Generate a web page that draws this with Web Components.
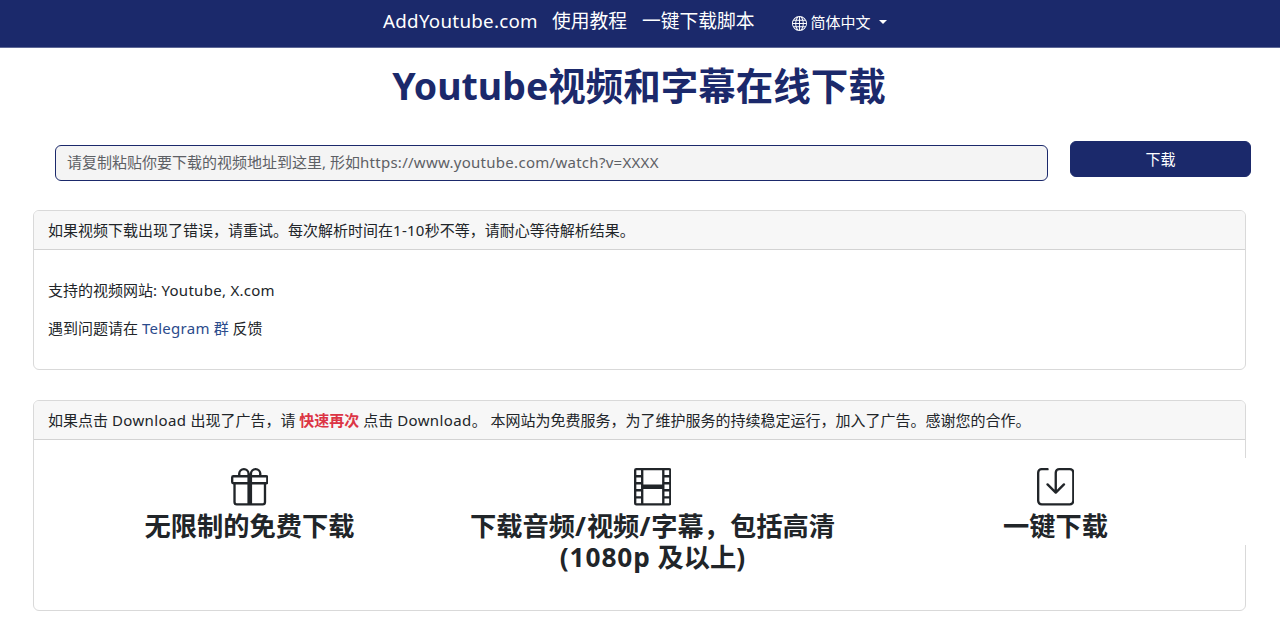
<!DOCTYPE html>
<html lang="zh-CN">
<head>
<meta charset="utf-8">
<title>AddYoutube.com</title>
<style>
  body{
    margin:0;
    height:623px;
    overflow:hidden;
    background:#fff;
    color:#212529;
    font:15px/22.5px "Noto Sans","Noto Sans CJK SC",sans-serif;
  }
  main{
    display:flex;
    flex-direction:column;
  }
  info-card{
    margin:0 34px 30px 33px;
  }
  p{
    margin:0 0 15px;
  }
  a{
    color:#2b4b8c;
    text-decoration:none;
  }
  b{
    color:#dc3545;
  }
  page-title{
    --latin-spacing:0;
  }
  .ad{
    --latin-spacing:.4px;
  }
  feature-item{
    --latin-spacing:.9px;
  }
</style>
</head>
<body>
<site-nav></site-nav>
<main>
  <page-title><latin-text>Youtube</latin-text>视频和字幕在线下载</page-title>
  <download-form>请复制粘贴你要下载的视频地址到这里, 形如<latin-text>https://www.youtube.com/watch?v=XXXX</latin-text></download-form>
  <info-card style="height:160px">
    <span slot="header">如果视频下载出现了错误，请重试。每次解析时间在<latin-text>1-10</latin-text>秒不等，请耐心等待解析结果。</span>
    <p>支持的视频网站<latin-text>: Youtube, X.com</latin-text></p>
    <p>遇到问题请在 <a href="#"><latin-text>Telegram</latin-text> 群</a> 反馈</p>
  </info-card>
  <info-card style="height:211px">
    <span slot="header" class="ad">如果点击 <latin-text>Download</latin-text> 出现了广告，请 <b>快速再次</b> 点击 <latin-text>Download</latin-text>。 本网站为免费服务，为了维护服务的持续稳定运行，加入了广告。感谢您的合作。</span>
    <feature-list>
      <feature-item icon="gift">无限制的免费下载</feature-item>
      <feature-item icon="film">下载音频<latin-text>/</latin-text>视频<latin-text>/</latin-text>字幕，包括高清<br><latin-text>(1080p</latin-text> 及以上)</feature-item>
      <feature-item icon="save">一键下载</feature-item>
    </feature-list>
  </info-card>
</main>
<script>
const ICONS={
  globe:'<path d="M0 8a8 8 0 1 1 16 0A8 8 0 0 1 0 8m7.5-6.923c-.67.204-1.335.82-1.887 1.855A8 8 0 0 0 5.145 4H7.5zM4.09 4a9.3 9.3 0 0 1 .64-1.539 7 7 0 0 1 .597-.933A7.03 7.03 0 0 0 2.255 4zm-.582 3.5c.03-.877.138-1.718.312-2.5H1.674a7 7 0 0 0-.656 2.5zM4.847 5a12.5 12.5 0 0 0-.338 2.5H7.5V5zM8.5 5v2.5h2.99a12.5 12.5 0 0 0-.337-2.5zM4.51 8.5a12.5 12.5 0 0 0 .337 2.5H7.5V8.5zm3.99 0V11h2.653c.187-.765.306-1.608.338-2.5zM5.145 12q.208.58.468 1.068c.552 1.035 1.218 1.65 1.887 1.855V12zm.182 2.472a7 7 0 0 1-.597-.933A9.3 9.3 0 0 1 4.09 12H2.255a7 7 0 0 0 3.072 2.472M3.82 11a13.7 13.7 0 0 1-.312-2.5h-2.49c.062.89.291 1.733.656 2.5zm6.853 3.472A7 7 0 0 0 13.745 12H11.91a9.3 9.3 0 0 1-.64 1.539 7 7 0 0 1-.597.933M8.5 12v2.923c.67-.204 1.335-.82 1.887-1.855q.26-.487.468-1.068zm3.68-1h2.146c.365-.767.594-1.61.656-2.5h-2.49a13.7 13.7 0 0 1-.312 2.5m2.802-3.5a7 7 0 0 0-.656-2.5H12.18c.174.782.282 1.623.312 2.5zM11.27 2.461c.247.464.462.98.64 1.539h1.835a7 7 0 0 0-3.072-2.472c.218.284.418.598.597.933M10.855 4a8 8 0 0 0-.468-1.068C9.835 1.897 9.17 1.282 8.5 1.077V4z"/>',
  gift:'<path d="M3 2.5a2.5 2.5 0 0 1 5 0 2.5 2.5 0 0 1 5 0v.006c0 .07 0 .27-.038.494H15a1 1 0 0 1 1 1v2a1 1 0 0 1-1 1v7.5a1.5 1.5 0 0 1-1.5 1.5h-11A1.5 1.5 0 0 1 1 14.500V7a1 1 0 0 1-1-1V4a1 1 0 0 1 1-1h2.038A3 3 0 0 1 3 2.506zm1.068.5H7v-.5a1.500 1.500 0 1 0-3 0c0 .085.002.274.045.43zM9 3h2.932l.023-.07c.043-.156.045-.345.045-.43a1.500 1.500 0 0 0-3 0zM1 4v2h6V4zm8 0v2h6V4zm5 3H9v8h4.500a.5.5 0 0 0 .5-.5zm-7 8V7H2v7.500a.5.5 0 0 0 .5.5z"/>',
  film:'<path d="M0 1a1 1 0 0 1 1-1h14a1 1 0 0 1 1 1v14a1 1 0 0 1-1 1H1a1 1 0 0 1-1-1zm4 0v6h8V1zm8 8H4v6h8zM1 1v2h2V1zm2 3H1v2h2zM1 7v2h2V7zm2 3H1v2h2zm-2 3v2h2v-2zM15 1h-2v2h2zm-2 3v2h2V4zm2 3h-2v2h2zm-2 3v2h2v-2zm2 3h-2v2h2z"/>',
  save:'<path d="M2 1a1 1 0 0 0-1 1v12a1 1 0 0 0 1 1h12a1 1 0 0 0 1-1V2a1 1 0 0 0-1-1H9.500a1 1 0 0 0-1 1v7.293l2.646-2.647a.5.5 0 0 1 .708.708l-3.500 3.500a.5.5 0 0 1-.708 0l-3.500-3.500a.5.5 0 1 1 .708-.708L7.500 9.293V2a2 2 0 0 1 2-2H14a2 2 0 0 1 2 2v12a2 2 0 0 1-2 2H2a2 2 0 0 1-2-2V2a2 2 0 0 1 2-2h2.500a.5.5 0 0 1 0 1z"/>'
};
const svg=name=>`<svg viewBox="0 0 16 16" fill="currentColor">${ICONS[name]}</svg>`;

// 중국어 문장 속 라틴 문자
class LatinText extends HTMLElement{
  constructor(){
    super();
    this.attachShadow({mode:'open'});
    this.shadowRoot.innerHTML=`
      <style>
        :host{
          display:inline;
          letter-spacing:var(--latin-spacing,.28px);
        }
      </style>
      <slot></slot>
    `.trim().replace(/>\s+</g,'><');
  }
}
customElements.define("latin-text",LatinText);

class SiteNav extends HTMLElement{
  constructor(){
    super();
    this.attachShadow({mode:'open'});
    this.shadowRoot.innerHTML=`
      <style>
        :host{
          display:block;
          background:#1b296b;
          color:#fff;
          border-bottom:1px solid #5e6896;
        }
        nav{
          display:flex;
          align-items:center;
          height:47px;
          padding:0 0 4px 383px;
          box-sizing:border-box;
          font-size:18.75px;
          white-space:nowrap;
        }
        a{
          color:inherit;
          text-decoration:none;
          margin-right:15px;
        }
        .brand{
          width:154px;
        }
        .lang{
          display:flex;
          align-items:center;
          margin:1px 0 0 22px;
          font-size:15px;
        }
        svg{
          width:15px;
          height:15px;
          margin:2px 4px 0 0;
        }
        .lang::after{
          content:'';
          margin:-1px 0 0 8px;
          border:4px solid transparent;
          border-top-color:#fff;
          border-bottom:0;
        }
      </style>
      <nav>
        <a class="brand"><latin-text>AddYoutube.com</latin-text></a>
        <a>使用教程</a>
        <a>一键下载脚本</a>
        <span class="lang">${svg('globe')}简体中文</span>
      </nav>
    `;
  }
}
customElements.define("site-nav",SiteNav);

class PageTitle extends HTMLElement{
  constructor(){
    super();
    this.attachShadow({mode:'open'});
    this.shadowRoot.innerHTML=`
      <style>
        :host{
          display:block;
          height:93px;
        }
        h1{
          margin:0;
          padding:15px 2px 0 0;
          color:#1b296b;
          font-size:37.5px;
          line-height:45px;
          text-align:center;
        }
      </style>
      <h1><slot></slot></h1>
    `;
  }
}
customElements.define("page-title",PageTitle);

class DownloadForm extends HTMLElement{
  constructor(){
    super();
    this.attachShadow({mode:'open'});
    this.shadowRoot.innerHTML=`
      <style>
        :host{
          display:block;
          height:69px;
        }
        form{
          display:flex;
          align-items:flex-start;
          gap:22px;
          padding:0 29px 0 55px;
        }
        .field{
          display:grid;
          flex:1;
          margin-top:4px;
        }
        .field>*{
          grid-area:1/1;
        }
        input,button{
          box-sizing:border-box;
          height:36px;
          border:1px solid #1b296b;
          border-radius:6px;
          font:inherit;
        }
        input{
          width:100%;
          padding:0 11px;
          background:#f4f4f4;
        }
        label{
          align-self:center;
          padding:0 0 1px 12px;
          color:#5d6065;
          pointer-events:none;
        }
        input:not(:placeholder-shown)+label{
          visibility:hidden;
        }
        button{
          width:181px;
          background:#1b296b;
          color:#fff;
        }
      </style>
      <form>
        <div class="field">
          <input type="text" id="url" placeholder=" ">
          <label for="url"><slot></slot></label>
        </div>
        <button type="button">下载</button>
      </form>
    `;
  }
}
customElements.define("download-form",DownloadForm);

class InfoCard extends HTMLElement{
  constructor(){
    super();
    this.attachShadow({mode:'open'});
    this.shadowRoot.innerHTML=`
      <style>
        :host{
          display:block;
          box-sizing:border-box;
          border:1px solid #d9d9d9;
          border-radius:6px;
        }
        header{
          height:39px;
          padding:8px 14px;
          box-sizing:border-box;
          background:#f7f7f7;
          border-bottom:1px solid #d3d3d3;
          border-radius:5px 5px 0 0;
          white-space:nowrap;
        }
        .body{
          padding:29px 14px 0;
        }
      </style>
      <header><slot name="header"></slot></header>
      <div class="body"><slot></slot></div>
    `;
  }
}
customElements.define("info-card",InfoCard);

class FeatureList extends HTMLElement{
  constructor(){
    super();
    this.attachShadow({mode:'open'});
    this.shadowRoot.innerHTML=`
      <style>
        :host{
          display:grid;
          grid-template-columns:repeat(3,403px);
          align-items:start;
          margin-top:-11px;
        }
      </style>
      <slot></slot>
    `;
  }
}
customElements.define("feature-list",FeatureList);

class FeatureItem extends HTMLElement{
  constructor(){
    super();
    this.attachShadow({mode:'open'});
    this.shadowRoot.innerHTML=`
      <style>
        :host{
          display:block;
          min-height:87px;
          box-sizing:border-box;
          padding-top:10px;
          background:#fff;
          text-align:center;
        }
        svg{
          display:block;
          width:37.5px;
          height:37.5px;
          margin:0 auto;
        }
        h3{
          margin:5px 0 0;
          font-size:26.25px;
          line-height:31.5px;
          white-space:nowrap;
        }
      </style>
      ${svg(this.getAttribute('icon'))}
      <h3><slot></slot></h3>
    `;
  }
}
customElements.define("feature-item",FeatureItem);
</script>
</body>
</html>
